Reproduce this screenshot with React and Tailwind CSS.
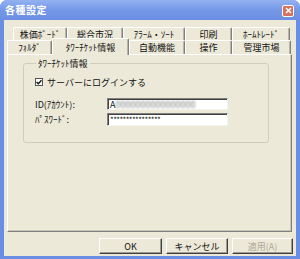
import React from "react";

const font = { fontFamily: '"Noto Sans CJK JP", "Noto Sans", sans-serif' };

function Tab({ w, label, selected }) {
  if (selected) {
    return (
      <div
        className="h-[17px] -mb-[1px] relative z-10 bg-[#ece9d8] border-l border-t border-white border-r border-r-[#808080] rounded-t-[2px] flex items-center justify-center text-[9px] leading-none text-[#111] shadow-[inset_-1px_0_0_#b8b5a6]"
        style={{ width: w }}
      >
        {label}
      </div>
    );
  }
  return (
    <div
      className="h-full bg-[#ece9d8] border-l border-t border-white border-r border-r-[#808080] rounded-t-[2px] flex items-center justify-center text-[9px] leading-none text-[#111] shadow-[inset_-1px_0_0_#b8b5a6]"
      style={{ width: w }}
    >
      {label}
    </div>
  );
}

function Btn({ children, disabled }) {
  return (
    <div
      className={`h-[16px] flex items-center justify-center bg-[#ece9d8] border border-t-white border-l-white border-r-[#404040] border-b-[#404040] shadow-[inset_-1px_-1px_0_#a09d90] text-[9px] leading-none ${disabled ? "text-[#aca899]" : "text-[#111]"}`}
    >
      {children}
    </div>
  );
}

export default function App() {
  return (
    <div className="w-[300px] h-[259px] bg-[#6a8ee3] rounded-t-[7px] flex flex-col overflow-hidden" style={font}>
      {/* title bar */}
      <div className="h-[20px] flex items-center justify-between pl-[5px] pr-[6px] bg-gradient-to-b from-[#94b2f1] via-[#7598e7] to-[#6a8ee3]">
        <span className="text-white text-[10px] font-bold leading-none tracking-[0.5px]">各種設定</span>
        <div className="w-[12px] h-[12px] rounded-[2px] border border-white bg-[#d6705f] flex items-center justify-center mt-[1px]">
          <svg width="7" height="7" viewBox="0 0 7 7">
            <path d="M1 1 L6 6 M6 1 L1 6" stroke="white" strokeWidth="1.6" />
          </svg>
        </div>
      </div>
      {/* body */}
      <div className="flex-1 mx-[4px] mb-[3px] bg-[#ece9d8] flex flex-col pt-[7px]">
        {/* tab row 1 */}
        <div className="h-[13px] flex ml-[9px]">
          <Tab w={54} label="株価ﾎﾞｰﾄﾞ" />
          <Tab w={56} label="総合市況" />
          <Tab w={62} label="ｱﾗｰﾑ・ｿｰﾄ" />
          <Tab w={47} label="印刷" />
          <Tab w={58} label="ﾎｰﾑﾄﾚｰﾄﾞ" />
        </div>
        {/* tab row 2 */}
        <div className="h-[14px] flex items-end ml-[3px]">
          <Tab w={45} label="ﾌｫﾙﾀﾞ" />
          <Tab w={77} label="ﾀﾜｰﾁｹｯﾄ情報" selected />
          <Tab w={56} label="自動機能" />
          <Tab w={47} label="操作" />
          <Tab w={59} label="管理市場" />
        </div>
        {/* panel */}
        <div className="h-[178px] w-[285px] ml-[3px] border border-t-white border-l-white border-r-[#808080] border-b-[#808080] shadow-[inset_-1px_-1px_0_#c8c5b6] pt-[4px] pl-[15px]">
          <fieldset className="w-[246px] h-[84px] border border-[#d0cdbc] rounded-[3px] px-[11px] pt-[9px] text-[9px] leading-none text-[#111]">
            <legend className="px-[2px] ml-[1px] text-[9px] leading-none">ﾀﾜｰﾁｹｯﾄ情報</legend>
            <div className="flex items-center gap-[4px] h-[10px]">
              <div className="w-[8px] h-[8px] border border-[#555] bg-white flex items-center justify-center">
                <svg width="6" height="6" viewBox="0 0 6 6">
                  <path d="M0.5 3 L2.3 4.8 L5.5 1.2" stroke="#111" strokeWidth="1.4" fill="none" />
                </svg>
              </div>
              <span>サーバーにログインする</span>
            </div>
            <div className="mt-[11px] flex items-center h-[12px]">
              <span className="w-[72px]">ID(ｱｶｳﾝﾄ):</span>
              <div className="w-[121px] h-[12px] bg-white border border-t-[#808080] border-l-[#808080] border-r-[#f4f3ee] border-b-[#f4f3ee] shadow-[inset_1px_1px_0_#404040] flex items-center pl-[2px] text-[9px]">
                <span>A</span>
                <span className="text-[#777] blur-[1px]">0000000000000000</span>
              </div>
            </div>
            <div className="mt-[3px] flex items-center h-[13px]">
              <span className="w-[72px]">ﾊﾟｽﾜｰﾄﾞ:</span>
              <div className="w-[121px] h-[13px] bg-white border border-t-[#808080] border-l-[#808080] border-r-[#f4f3ee] border-b-[#f4f3ee] shadow-[inset_1px_1px_0_#404040] flex items-center pl-[2px] text-[8px] tracking-[-0.6px]">
                ****************
              </div>
            </div>
          </fieldset>
        </div>
        {/* buttons */}
        <div className="mt-[6px] flex justify-end pr-[3px] gap-[4px]">
          <div className="w-[63px]"><Btn>OK</Btn></div>
          <div className="w-[62px]"><Btn>キャンセル</Btn></div>
          <div className="w-[61px]"><Btn disabled>適用(A)</Btn></div>
        </div>
      </div>
    </div>
  );
}
